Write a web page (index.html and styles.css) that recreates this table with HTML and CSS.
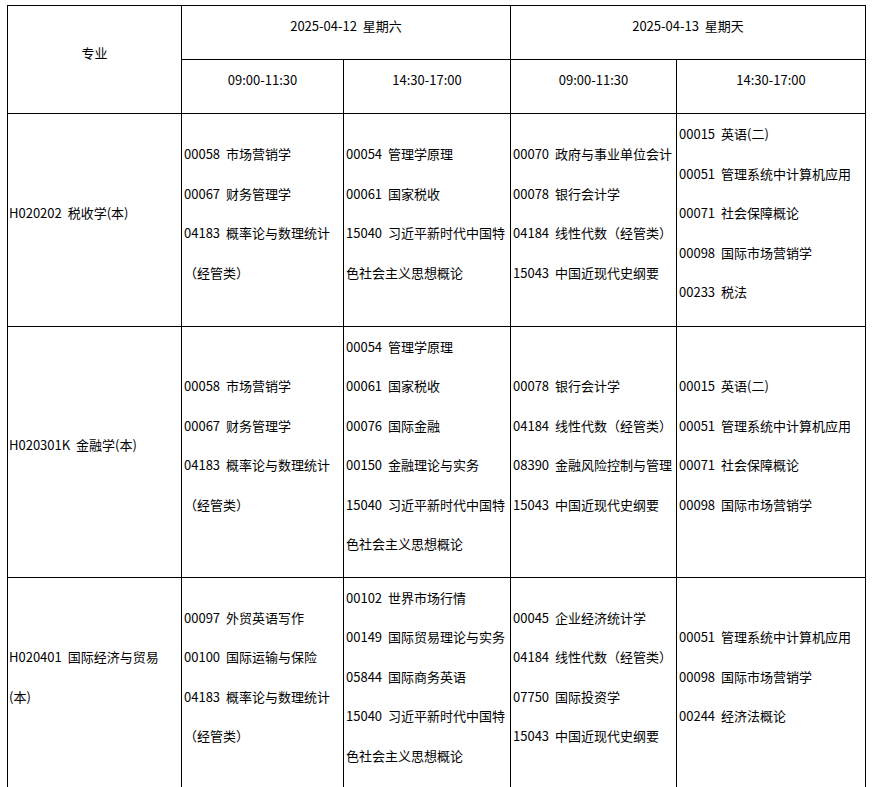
FILE: index.html
```html
<!DOCTYPE html>
<html lang="zh-CN">
<head>
<meta charset="utf-8">
<title>考试安排</title>
<link rel="stylesheet" href="styles.css">
</head>
<body>
<div class="page">
<table class="plan">
  <colgroup>
    <col class="c-major">
    <col class="c-a">
    <col class="c-b">
    <col class="c-c">
    <col class="c-d">
  </colgroup>
  <thead>
    <tr class="h1">
      <th rowspan="2" class="head">专业</th>
      <th colspan="2" class="head">2025-04-12 星期六</th>
      <th colspan="2" class="head">2025-04-13 星期天</th>
    </tr>
    <tr class="h2">
      <th class="head">09:00-11:30</th>
      <th class="head">14:30-17:00</th>
      <th class="head">09:00-11:30</th>
      <th class="head">14:30-17:00</th>
    </tr>
  </thead>
  <tbody>
    <tr class="r1">
      <td class="major">H020202 税收学(本)</td>
      <td>00058 市场营销学<br>00067 财务管理学<br>04183 概率论与数理统计<br>（经管类）</td>
      <td>00054 管理学原理<br>00061 国家税收<br>15040 习近平新时代中国特<br>色社会主义思想概论</td>
      <td>00070 政府与事业单位会计<br>00078 银行会计学<br>04184 线性代数（经管类）<br>15043 中国近现代史纲要</td>
      <td>00015 英语(二)<br>00051 管理系统中计算机应用<br>00071 社会保障概论<br>00098 国际市场营销学<br>00233 税法</td>
    </tr>
    <tr class="r2">
      <td class="major">H020301K 金融学(本)</td>
      <td>00058 市场营销学<br>00067 财务管理学<br>04183 概率论与数理统计<br>（经管类）</td>
      <td>00054 管理学原理<br>00061 国家税收<br>00076 国际金融<br>00150 金融理论与实务<br>15040 习近平新时代中国特<br>色社会主义思想概论</td>
      <td>00078 银行会计学<br>04184 线性代数（经管类）<br>08390 金融风险控制与管理<br>15043 中国近现代史纲要</td>
      <td>00015 英语(二)<br>00051 管理系统中计算机应用<br>00071 社会保障概论<br>00098 国际市场营销学</td>
    </tr>
    <tr class="r3">
      <td class="major">H020401 国际经济与贸易<br>(本)</td>
      <td>00097 外贸英语写作<br>00100 国际运输与保险<br>04183 概率论与数理统计<br>（经管类）</td>
      <td>00102 世界市场行情<br>00149 国际贸易理论与实务<br>05844 国际商务英语<br>15040 习近平新时代中国特<br>色社会主义思想概论</td>
      <td>00045 企业经济统计学<br>04184 线性代数（经管类）<br>07750 国际投资学<br>15043 中国近现代史纲要</td>
      <td>00051 管理系统中计算机应用<br>00098 国际市场营销学<br>00244 经济法概论</td>
    </tr>
  </tbody>
</table>
</div>
</body>
</html>
```

FILE: styles.css
```css
html, body {
  margin: 0;
  padding: 0;
  background: #ffffff;
}

.page {
  padding: 5px 0 0 7px;
}

.plan {
  border-collapse: collapse;
  table-layout: fixed;
  width: 858px;
  font-family: "Noto Sans CJK SC", "Liberation Sans", sans-serif;
  font-size: 13px;
  color: #000000;
}

.c-major { width: 174px; }
.c-a { width: 162px; }
.c-b { width: 167px; }
.c-c { width: 166px; }
.c-d { width: 189px; }

.plan th,
.plan td {
  border: 1px solid #000000;
  line-height: 39.5px;
  padding: 0 0 13px 2px;
  vertical-align: middle;
  white-space: nowrap;
  overflow: hidden;
  word-spacing: 3px;
}

.plan th {
  font-weight: normal;
  text-align: center;
  padding-left: 0;
}

.plan td {
  text-align: left;
}

.plan td.major {
  padding-left: 1px;
}

.h1 { height: 54px; }
.h2 { height: 53px; }
.r1 { height: 213px; }
.r2 { height: 250px; }
.r3 { height: 212px; }
```
